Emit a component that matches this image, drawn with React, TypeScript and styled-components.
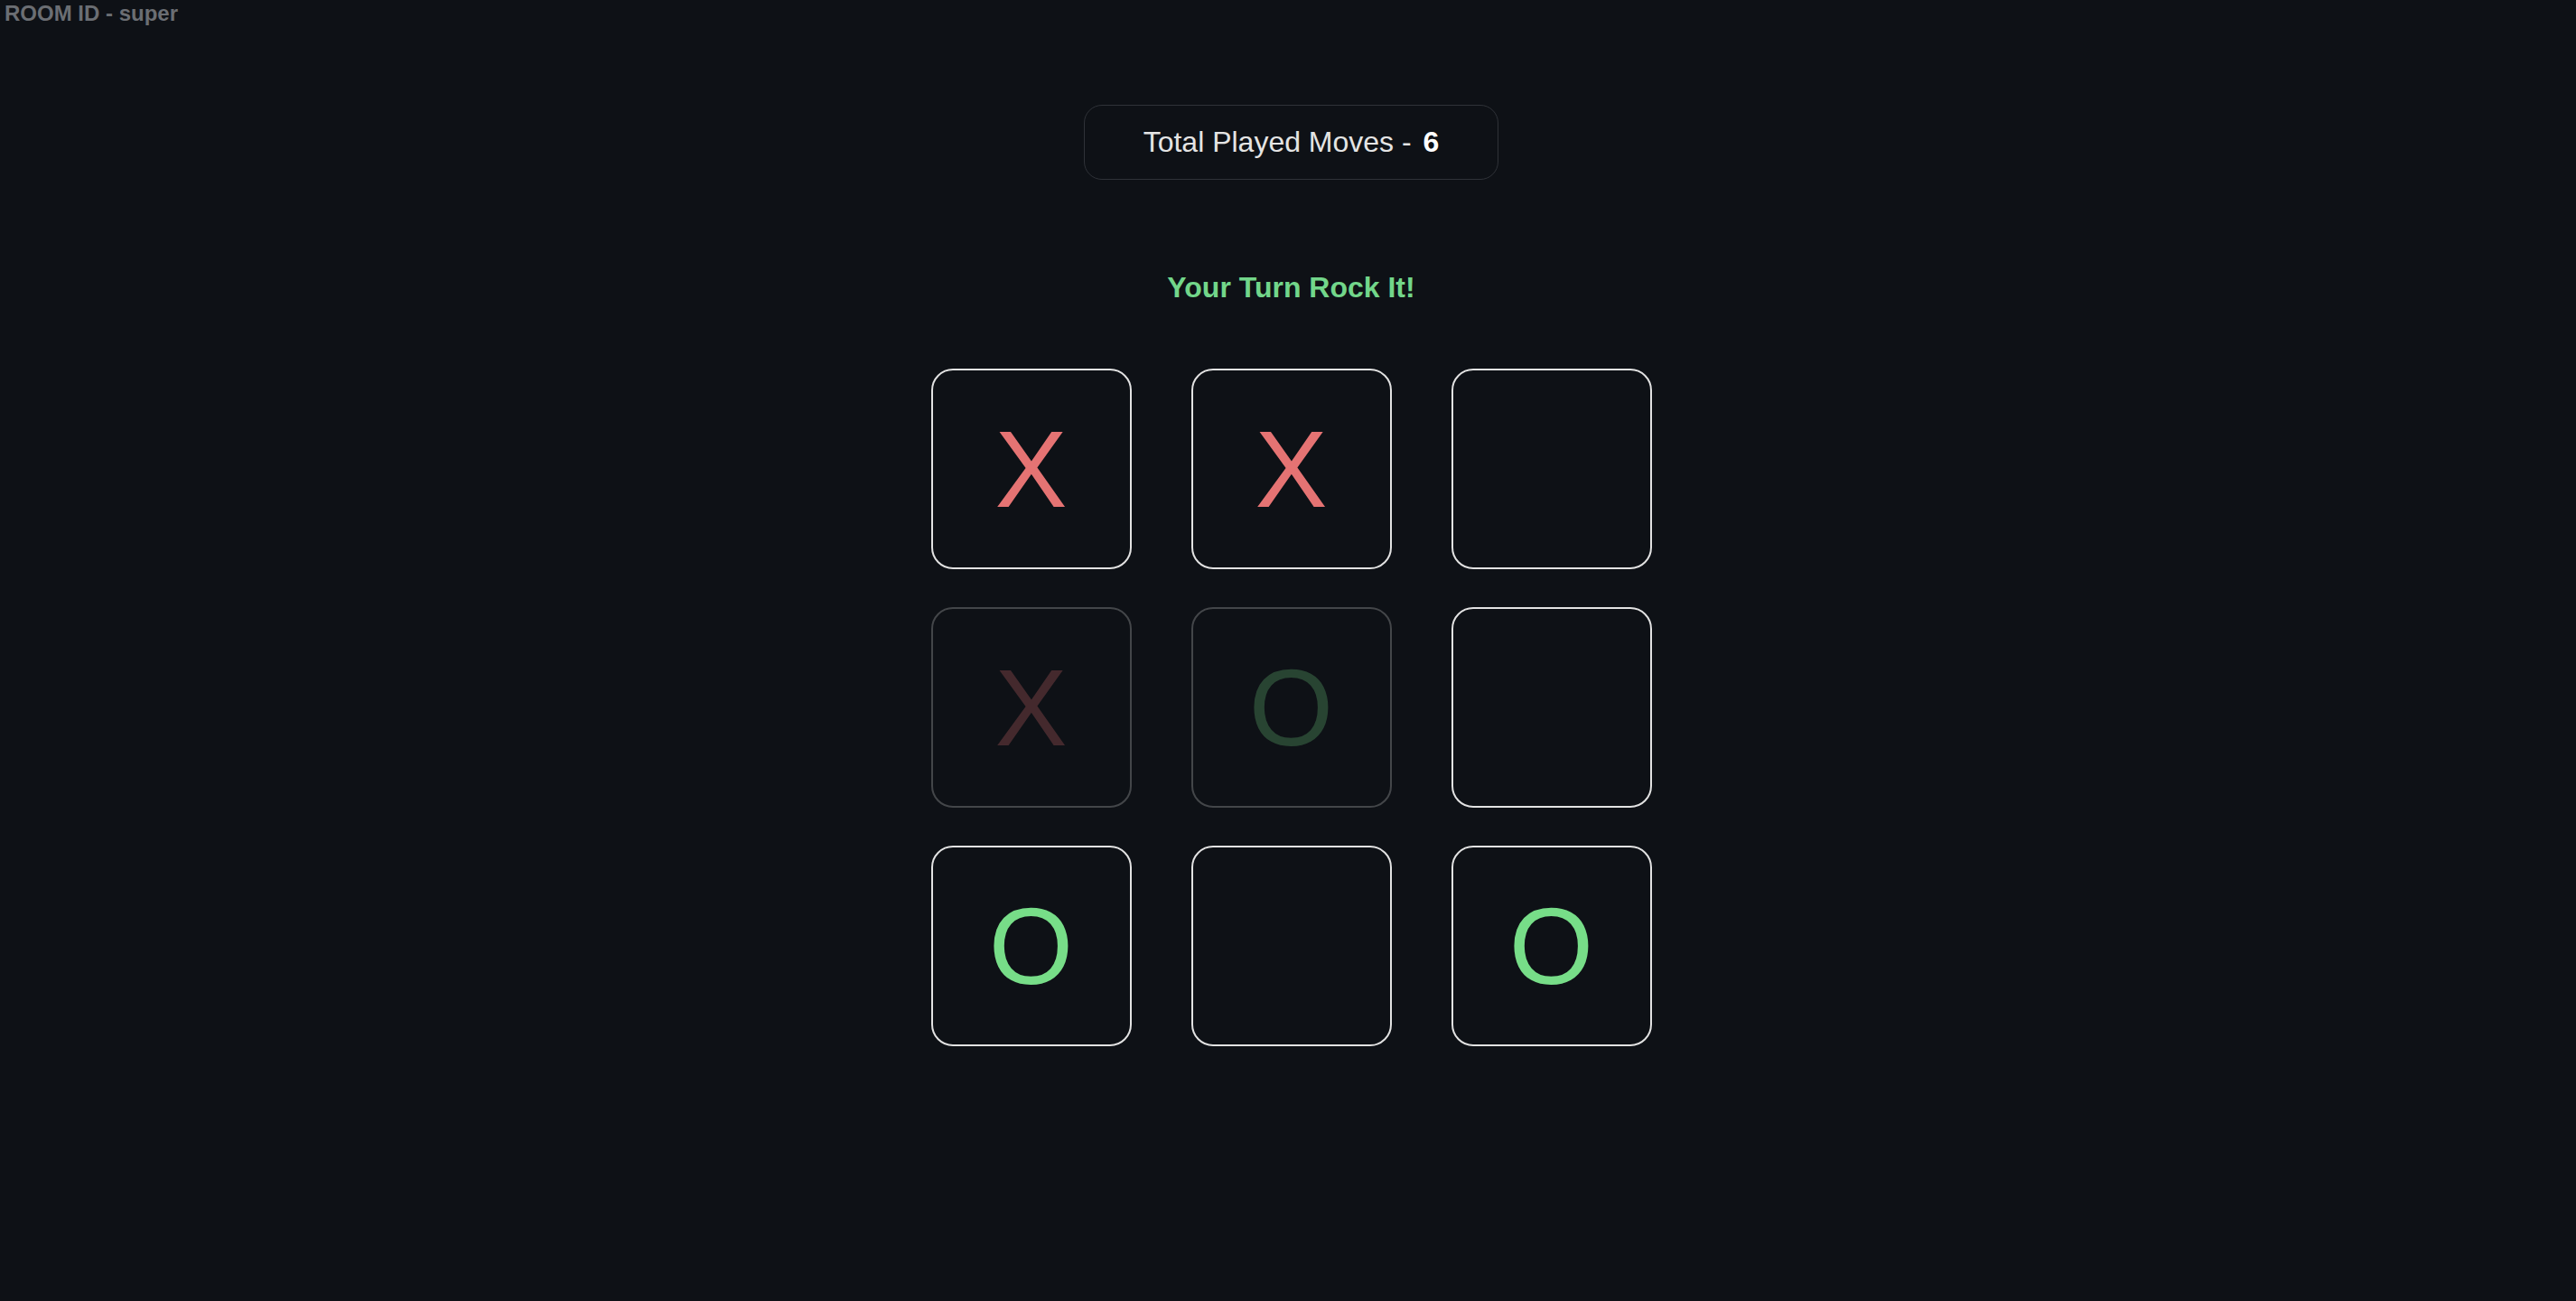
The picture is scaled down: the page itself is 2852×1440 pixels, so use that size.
import React from "react";
import styled, { createGlobalStyle } from "styled-components";

const GlobalStyle = createGlobalStyle`
  html, body {
    margin: 0;
    padding: 0;
    background: #0e1116;
  }
  body {
    font-family: "Liberation Sans", Arial, sans-serif;
  }
`;

const Page = styled.div`
  min-height: 100vh;
  background: #0e1116;
  font-family: "Liberation Sans", Arial, sans-serif;
`;

const RoomId = styled.div`
  padding: 1px 5px 0;
  font-size: 24px;
  font-weight: 700;
  color: #6b6e73;
`;

const Main = styled.main`
  display: flex;
  flex-direction: column;
  align-items: center;
  padding-top: 87px;
  padding-left: 7px;
`;

const MovesBox = styled.div`
  border: 1px solid #2f3238;
  border-radius: 20px;
  padding: 22px 65px;
  font-size: 32px;
  color: #e4e4e4;
`;

const MovesCount = styled.span`
  margin-left: 4px;
  font-weight: 700;
  color: #ffffff;
`;

const TurnText = styled.div`
  margin-top: 101px;
  font-size: 32px;
  font-weight: 700;
  color: #72d68a;
`;

const Board = styled.div`
  margin-top: 71px;
  display: grid;
  grid-template-columns: repeat(3, 222px);
  grid-auto-rows: 222px;
  column-gap: 66px;
  row-gap: 42px;
`;

const Cell = styled.div<{ $faded?: boolean }>`
  box-sizing: border-box;
  display: flex;
  align-items: center;
  justify-content: center;
  border: 2px solid #e2e2e2;
  border-radius: 24px;
  background: #0e1116;
  opacity: ${(p) => (p.$faded ? 0.25 : 1)};
`;

const Mark = styled.span<{ $kind: "X" | "O" }>`
  font-size: 120px;
  line-height: 1;
  color: ${(p) => (p.$kind === "X" ? "#e57373" : "#77dd88")};
`;

type CellData = { v: "X" | "O" | ""; faded?: boolean };

const cells: CellData[] = [
  { v: "X" },
  { v: "X" },
  { v: "" },
  { v: "X", faded: true },
  { v: "O", faded: true },
  { v: "" },
  { v: "O" },
  { v: "" },
  { v: "O" },
];

export default function App() {
  return (
    <Page>
      <GlobalStyle />
      <RoomId>ROOM ID - super</RoomId>
      <Main>
        <MovesBox>
          Total Played Moves - <MovesCount>6</MovesCount>
        </MovesBox>
        <TurnText>Your Turn Rock It!</TurnText>
        <Board>
          {cells.map((c, i) => (
            <Cell key={i} $faded={c.faded}>
              {c.v && <Mark $kind={c.v}>{c.v}</Mark>}
            </Cell>
          ))}
        </Board>
      </Main>
    </Page>
  );
}
